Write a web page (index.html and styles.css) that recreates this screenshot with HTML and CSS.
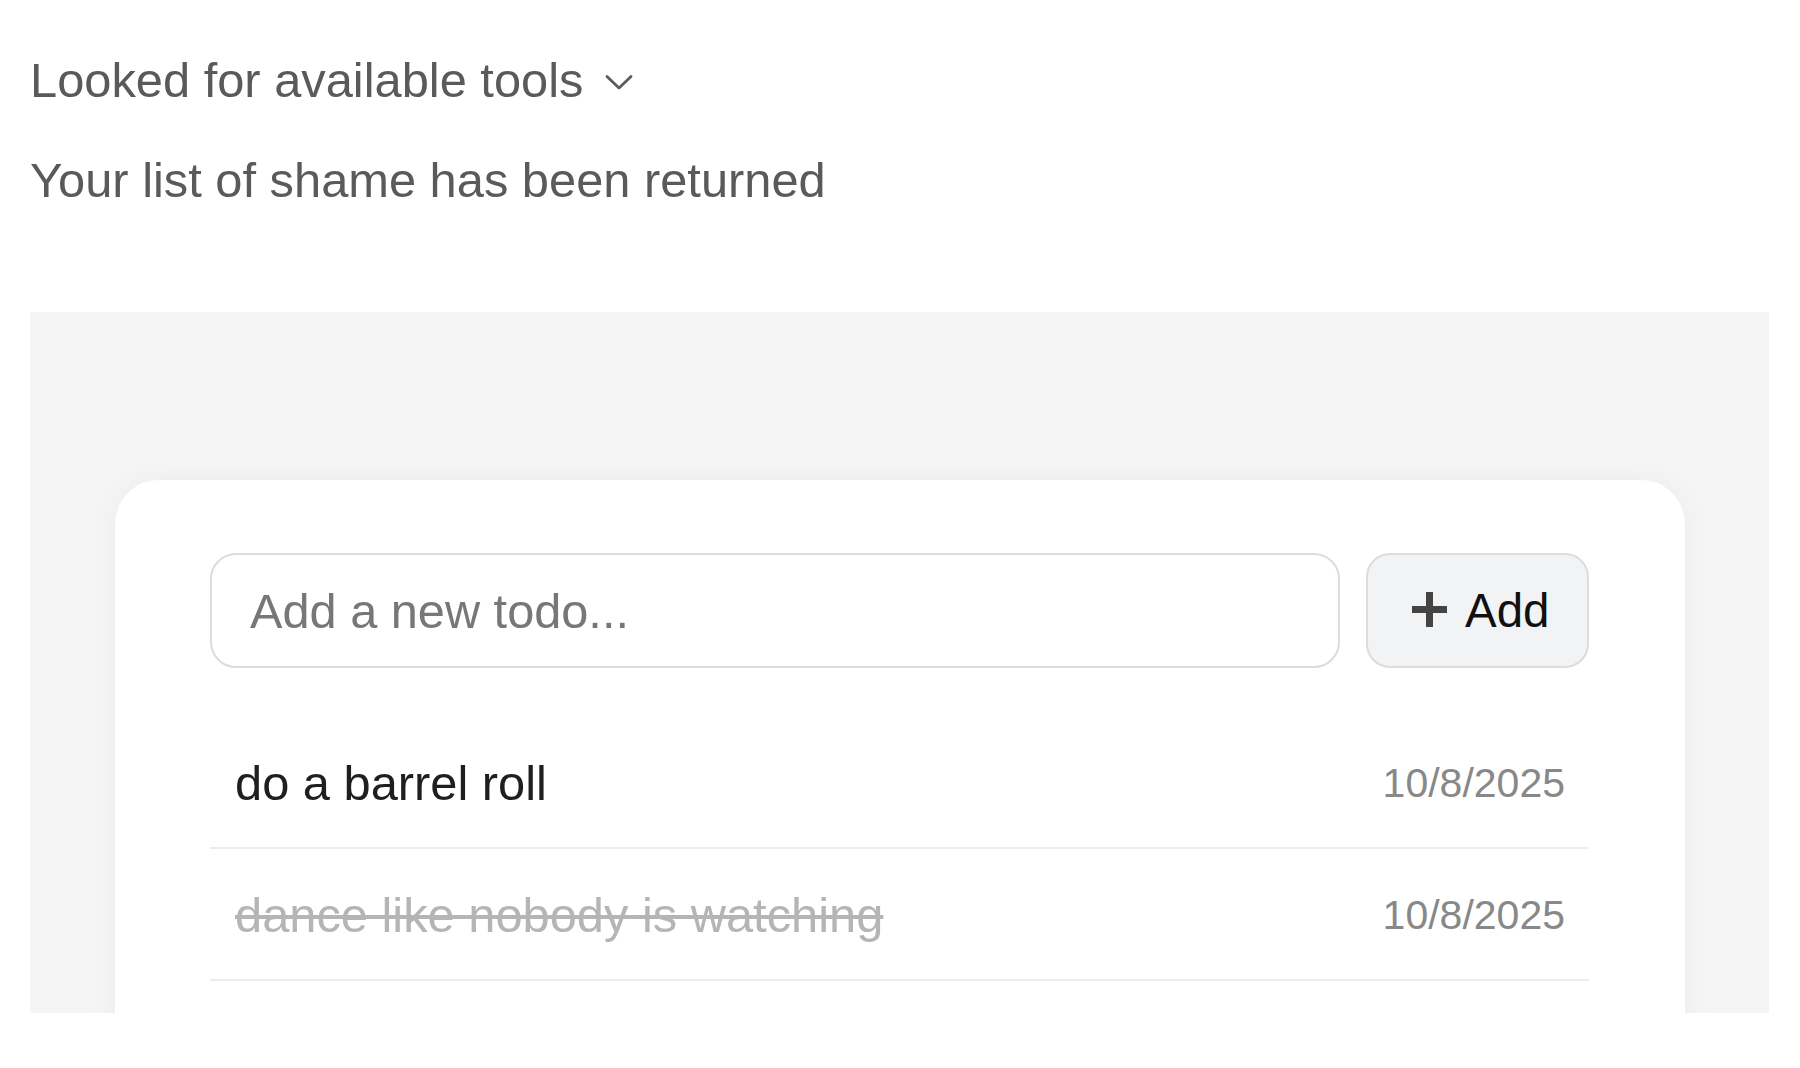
FILE: index.html
```html
<!DOCTYPE html>
<html lang="en">
<head>
<meta charset="utf-8">
<title>Todo</title>
<link rel="stylesheet" href="styles.css">
</head>
<body>
<div class="page">
  <div class="tools-line">
    <span class="tools-label">Looked for available tools</span>
    <svg class="chevron" width="28" height="17" viewBox="0 0 28 17" aria-hidden="true">
      <polyline points="2,2.5 14,14 26,2.5" fill="none" stroke="#5c5c5c" stroke-width="2.8" stroke-linecap="round" stroke-linejoin="round"/>
    </svg>
  </div>
  <p class="message">Your list of shame has been returned</p>

  <div class="panel">
    <div class="card">
      <div class="entry">
        <input class="todo-input" type="text" placeholder="Add a new todo...">
        <button class="add-btn" type="button">
          <svg class="plus" width="35" height="35" viewBox="0 0 35 35" aria-hidden="true">
            <rect x="14" y="0" width="7" height="35" fill="#444"/>
            <rect x="0" y="14" width="35" height="7" fill="#444"/>
          </svg>
          <span>Add</span>
        </button>
      </div>
      <ul class="todo-list">
        <li class="todo">
          <span class="todo-text">do a barrel roll</span>
          <span class="todo-date">10/8/2025</span>
        </li>
        <li class="todo done">
          <span class="todo-text">dance like nobody is watching</span>
          <span class="todo-date">10/8/2025</span>
        </li>
      </ul>
    </div>
  </div>
</div>
</body>
</html>
```

FILE: styles.css
```css
* { box-sizing: border-box; }

html, body {
  margin: 0;
  padding: 0;
  background: #ffffff;
}

body {
  font-family: "Liberation Sans", Arial, sans-serif;
  color: #5c5c5c;
}

.page {
  padding: 52px 31px 0 30px;
}

.tools-line {
  display: flex;
  align-items: center;
  gap: 22px;
  height: 56px;
}

.tools-label {
  font-size: 48.8px;
  line-height: 56px;
  color: #5a5a5a;
}

.chevron {
  flex: none;
  margin-top: 4px;
}

.message {
  margin: 44px 0 0 0;
  font-size: 48.8px;
  line-height: 56px;
  color: #5a5a5a;
}

.panel {
  margin-top: 104px;
  height: 701px;
  background: #f5f5f5;
  overflow: hidden;
  padding: 168px 84px 0 85px;
}

.card {
  background: #ffffff;
  border-radius: 44px;
  box-shadow: 0 0 32px rgba(0, 0, 0, 0.045);
  padding: 73px 96px 80px 95px;
  min-height: 700px;
}

.entry {
  display: flex;
  gap: 26px;
  height: 115px;
}

.todo-input {
  flex: 1;
  height: 115px;
  border: 2px solid #dcdcdc;
  border-radius: 26px;
  padding: 0 20px 0 38px;
  font-family: "Liberation Sans", Arial, sans-serif;
  font-size: 48.7px;
  color: #1f1f1f;
  background: #ffffff;
  outline: none;
}

.todo-input::placeholder {
  color: #777777;
}

.add-btn {
  flex: none;
  width: 223px;
  height: 115px;
  display: flex;
  align-items: center;
  gap: 18px;
  padding: 0 0 0 44px;
  border: 2px solid #dcdcdc;
  border-radius: 24px;
  background: #f2f3f5;
  font-family: "Liberation Sans", Arial, sans-serif;
  font-size: 47.5px;
  color: #111111;
}

.plus {
  flex: none;
  margin-top: -3px;
}

.todo-list {
  list-style: none;
  margin: 49px 0 0 0;
  padding: 0;
}

.todo {
  display: flex;
  align-items: center;
  justify-content: space-between;
  height: 132px;
  padding: 2px 24px 0 25px;
  border-bottom: 2px solid #ededed;
}

.todo-text {
  font-size: 48.8px;
  color: #1f1f1f;
}

.todo-date {
  font-size: 41px;
  color: #888888;
}

.todo.done .todo-text {
  color: #b5b5b5;
  text-decoration: line-through;
  text-decoration-color: #b5b5b5;
  text-decoration-thickness: 4px;
}
```
